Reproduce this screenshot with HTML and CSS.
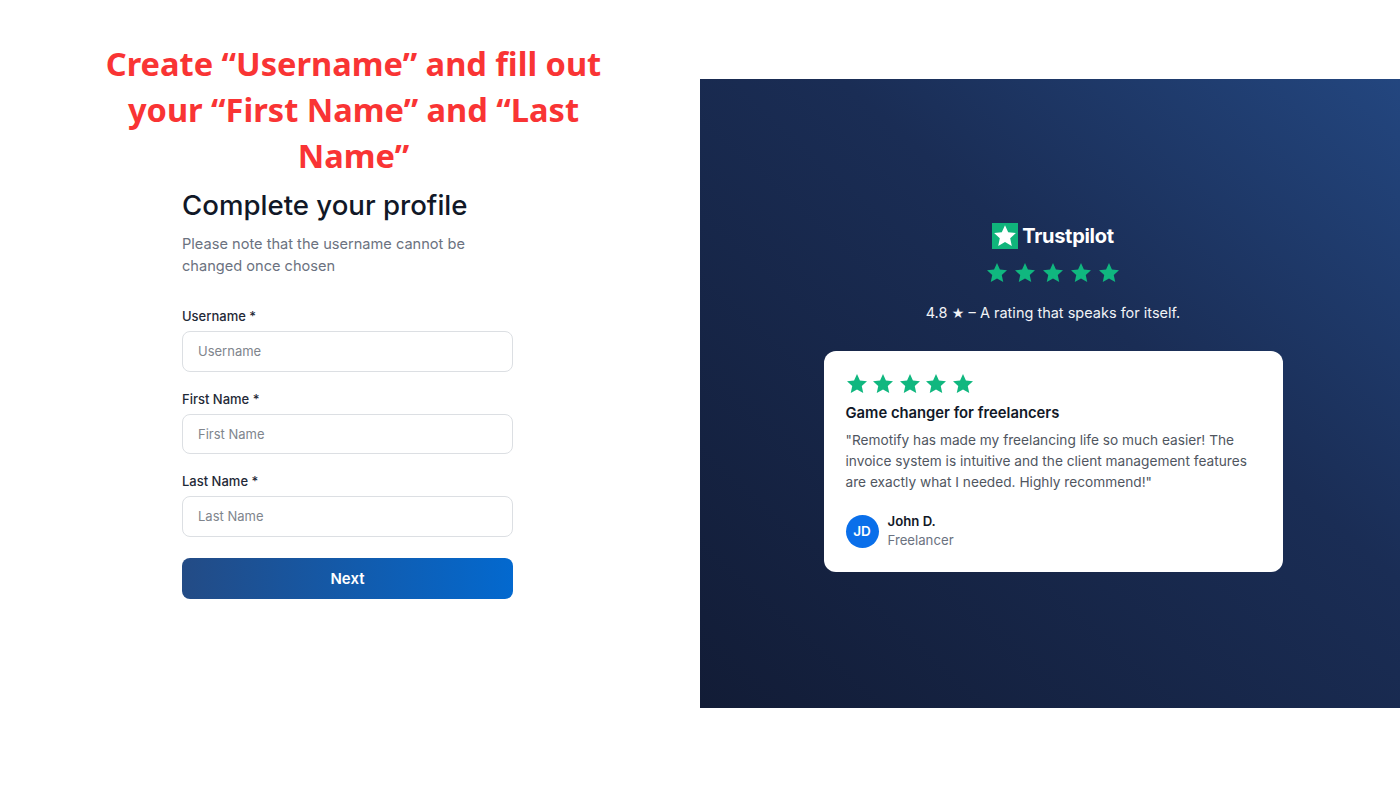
FILE: index.html
```html
<!DOCTYPE html>
<html lang="en">
<head>
<meta charset="utf-8">
<title>Complete your profile</title>
<link rel="stylesheet" href="styles.css">
</head>
<body>
<svg class="defs" width="0" height="0" aria-hidden="true"><defs><symbol id="star" viewBox="0 0 24 24"><path d="M12 1.200l3.200 7 7.700.9-5.700 5.200 1.600 7.600-6.800-3.900-6.800 3.900 1.600-7.600-5.700-5.200 7.700-.9z" stroke-linejoin="round"/></symbol></defs></svg>
<main class="page">
  <section class="left">
    <h1 class="headline">Create “Username” and fill out your “First Name” and “Last Name”</h1>
    <form class="form">
      <h2 class="form-title">Complete your profile</h2>
      <p class="form-note">Please note that the username cannot be changed once chosen</p>
      <label class="field"><span class="field-label">Username *</span><input class="input" placeholder="Username"></label>
      <label class="field"><span class="field-label">First Name *</span><input class="input" placeholder="First Name"></label>
      <label class="field"><span class="field-label">Last Name *</span><input class="input" placeholder="Last Name"></label>
      <button class="next" type="button">Next</button>
    </form>
  </section>
  <section class="panel">
    <div class="brand">
      <span class="brand-box"><svg class="brand-star"><use href="#star"/></svg></span>
      <span class="brand-name">Trustpilot</span>
    </div>
    <div class="stars stars-top">
      <svg class="star"><use href="#star"/></svg><svg class="star"><use href="#star"/></svg><svg class="star"><use href="#star"/></svg><svg class="star"><use href="#star"/></svg><svg class="star"><use href="#star"/></svg>
    </div>
    <p class="rating">4.8 <span class="rating-star">★</span> – A rating that speaks for itself.</p>
    <article class="card">
      <div class="stars stars-card">
        <svg class="star"><use href="#star"/></svg><svg class="star"><use href="#star"/></svg><svg class="star"><use href="#star"/></svg><svg class="star"><use href="#star"/></svg><svg class="star"><use href="#star"/></svg>
      </div>
      <h3 class="card-title">Game changer for freelancers</h3>
      <p class="quote">"Remotify has made my freelancing life so much easier! The invoice system is intuitive and the client management features are exactly what I needed. Highly recommend!"</p>
      <div class="author">
        <span class="avatar">JD</span>
        <div class="author-text">
          <div class="author-name">John D.</div>
          <div class="author-role">Freelancer</div>
        </div>
      </div>
    </article>
  </section>
</main>
</body>
</html>
```
FILE: styles.css
```css
* { box-sizing: border-box; }
html, body { margin: 0; padding: 0; background: #fff; }
body { font-family: Inter, "Liberation Sans", sans-serif; height: 787px; overflow: hidden; }
.defs { display: block; height: 0; }
.page { display: flex; align-items: flex-start; width: 1400px; height: 787px; }
.left { width: 700px; padding-top: 41px; display: flex; flex-direction: column; }
.headline { margin: 0 0 0 90px; width: 527px; text-align: center; color: #f93434; font: 700 32.600px/46px "Noto Sans", sans-serif; }
.form { margin: 6px 0 0 182px; width: 331px; display: flex; flex-direction: column; }
.form-title { margin: 0; font-size: 27.600px; line-height: 40px; font-weight: 450; color: #111827; }
.form-note { margin: 8px 0 0; font-size: 14.600px; line-height: 22px; color: #6b7280; width: 320px; }
.field { display: flex; flex-direction: column; }
.form-note + .field { margin-top: 29px; }
.field + .field { margin-top: 17px; }
.field-label { font-size: 13px; line-height: 20px; font-weight: 450; color: #1f2937; margin-bottom: 5px; }
.input { height: 40.500px; width: 100%; border: 1.500px solid #dcdfe3; border-radius: 8px; padding: 0 15px; font: 400 13px Inter, sans-serif; color: #111827; background: #fff; outline: none; }
.input::placeholder { color: #80858d; opacity: 1; }
.next { margin-top: 21.500px; height: 41px; width: 100%; border: 0; border-radius: 8px; background: linear-gradient(90deg, #234b85, #0369cf); color: #fff; font: 600 15px Inter, sans-serif; }
.panel { margin-top: 79px; width: 700px; height: 629px; background: linear-gradient(to top right, #121c36 0%, #1a2d55 60%, #23467f 100%); display: flex; flex-direction: column; align-items: center; padding: 143px 0 0 6px; }
.brand { display: flex; align-items: center; gap: 4px; height: 27px; }
.brand-box { width: 26px; height: 26px; background: #10b47b; display: flex; align-items: center; justify-content: center; }
.brand-star { width: 24px; height: 24px; fill: #fff; }
.brand-name { color: #fff; font-size: 20px; font-weight: 700; letter-spacing: -0.3px; }
.stars { display: flex; }
.star { fill: #10b77f; width: 22px; height: 22px; }
.stars-top { gap: 6px; margin-top: 13px; }
.rating { margin: 18px 0 0; color: #f1f3f6; font-size: 14.500px; line-height: 22px; }
.rating-star { font-size: 12.500px; }
.card { margin-top: 26px; width: 459px; height: 221px; background: #fff; border-radius: 12px; padding: 22px; display: flex; flex-direction: column; }
.stars-card { gap: 4.500px; }
.card-title { margin: 7px 0 0; font-size: 14.800px; line-height: 22px; font-weight: 600; color: #111827; }
.quote { margin: 6px 0 0; font-size: 13.700px; line-height: 21px; color: #50565f; }
.author { display: flex; align-items: center; gap: 9px; margin-top: 19px; }
.avatar { width: 33px; height: 33px; border-radius: 50%; background: #0a6fea; color: #fff; font-size: 13.500px; font-weight: 600; display: flex; align-items: center; justify-content: center; }
.author-name { font-size: 13.200px; line-height: 19px; font-weight: 600; color: #111827; }
.author-role { font-size: 13.200px; line-height: 19px; color: #6b7280; }
```
